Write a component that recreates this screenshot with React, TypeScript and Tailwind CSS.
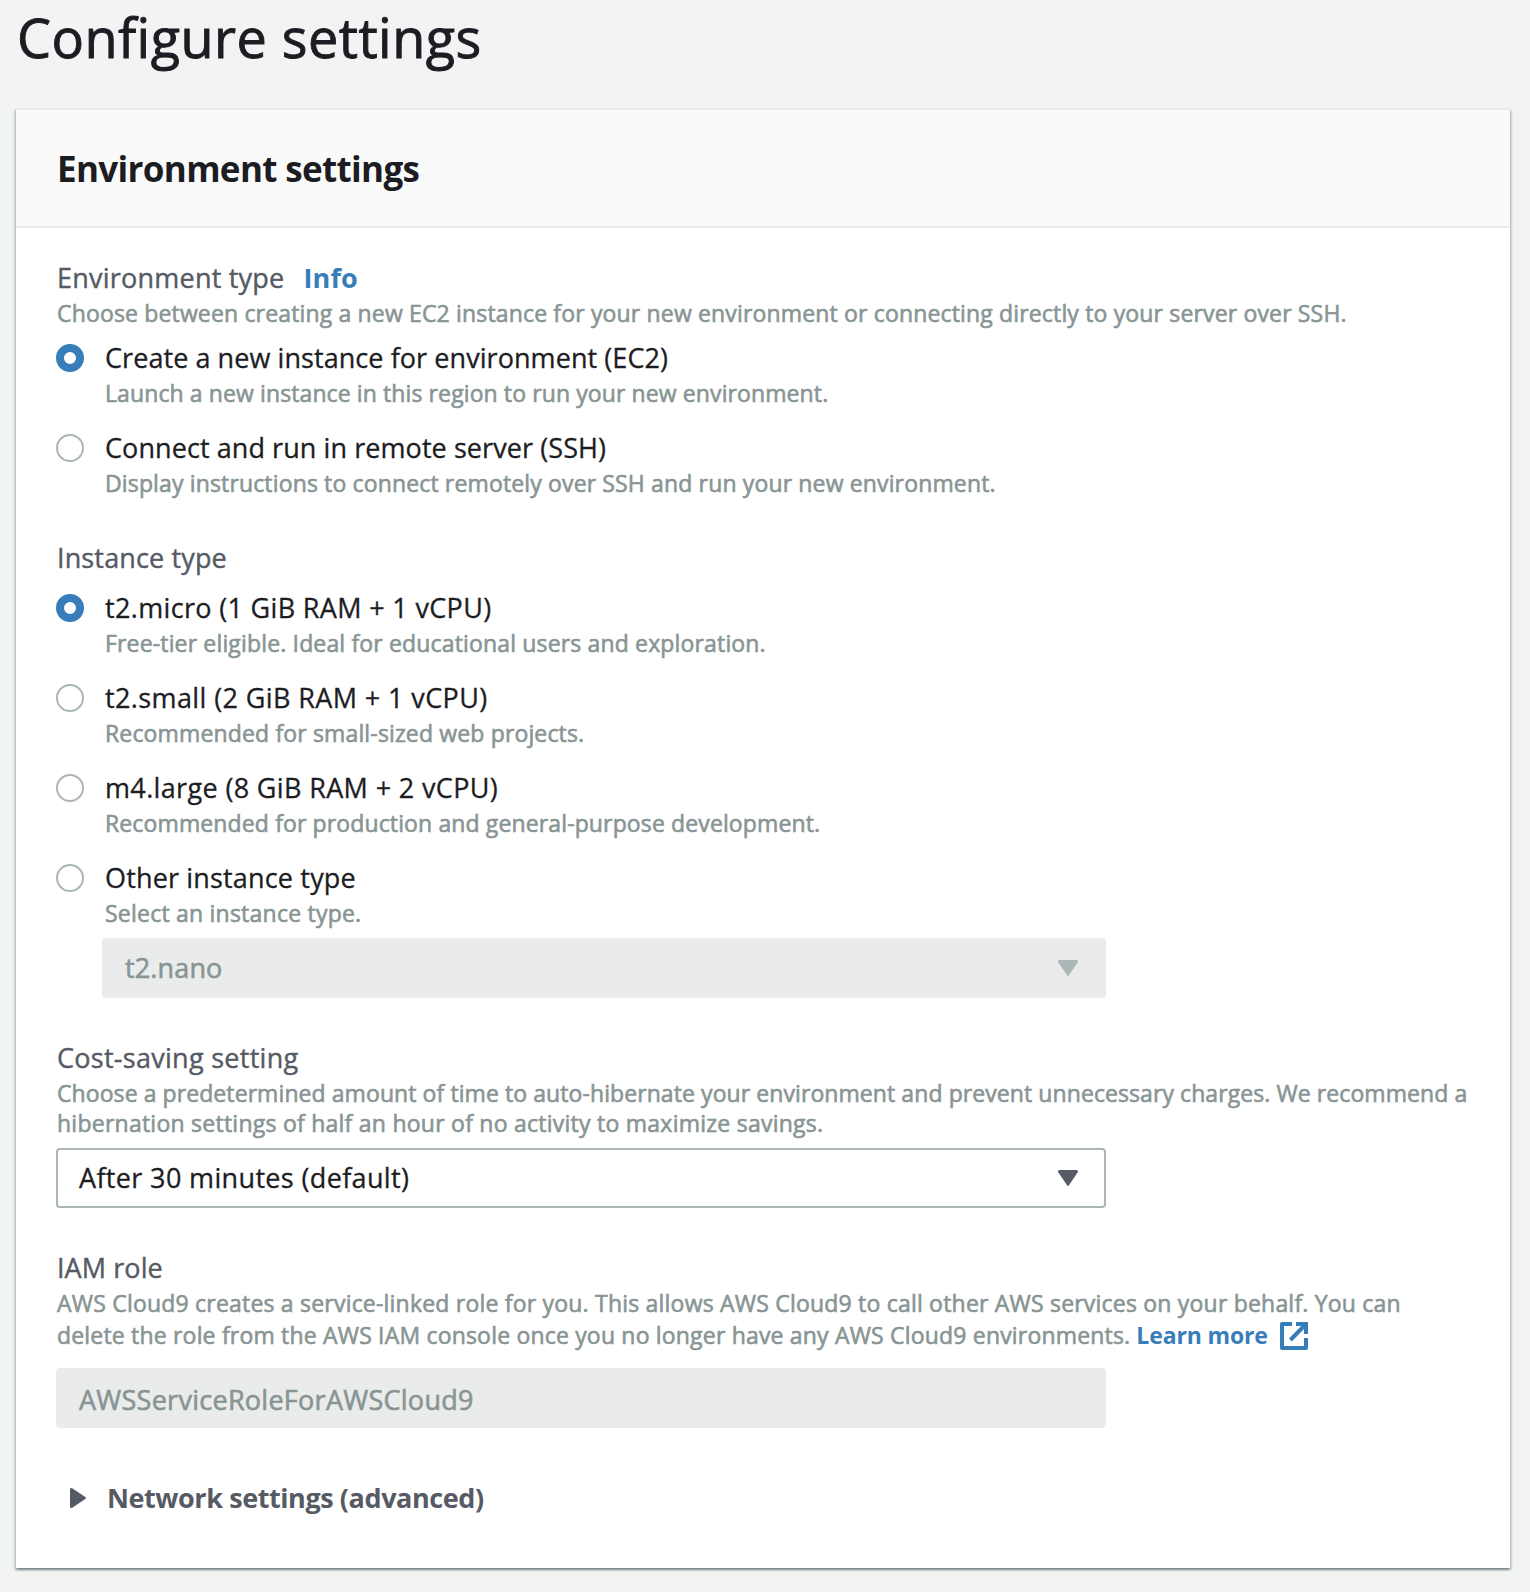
import type { ReactNode } from "react";

function Radio({ checked }: { checked?: boolean }) {
  return checked ? (
    <span className="mt-[5px] size-7 shrink-0 rounded-full border-8 border-[#377db9] bg-white" />
  ) : (
    <span className="mt-[5px] size-7 shrink-0 rounded-full border-2 border-[#abb6b7] bg-white" />
  );
}

function Option({
  label,
  hint,
  labelTracking,
  hintTracking,
  checked,
}: {
  label: string;
  hint: string;
  labelTracking: string;
  hintTracking: string;
  checked?: boolean;
}) {
  return (
    <div className="flex gap-5">
      <Radio checked={checked} />
      <div>
        <div
          className={`pl-px text-[27px] leading-[37px] text-[#1c1d23] [-webkit-text-stroke:0.3px_#1c1d23] ${labelTracking}`}
        >
          {label}
        </div>
        <Hint tracking={hintTracking}>{hint}</Hint>
      </div>
    </div>
  );
}

function Hint({ children, tracking }: { children: ReactNode; tracking: string }) {
  return (
    <div
      className={`mt-0.5 whitespace-nowrap pl-px text-[23px] leading-[30px] text-[#889594] [-webkit-text-stroke:0.6px_#889594] ${tracking}`}
    >
      {children}
    </div>
  );
}

function Label({ children, tracking }: { children: ReactNode; tracking: string }) {
  return (
    <div
      className={`pl-px text-[27px] leading-[37px] text-[#555a64] [-webkit-text-stroke:0.4px_#555a64] ${tracking}`}
    >
      {children}
    </div>
  );
}

function CaretDown({ className }: { className: string }) {
  return (
    <svg className={`h-4 w-5 ${className}`} viewBox="0 0 20 16" fill="currentColor">
      <path d="M1.2 0h17.6q1.8.4.9 2.2L11 15.3q-1 1.2-2 0L.3 2.2Q-.6.4 1.2 0z" />
    </svg>
  );
}

function ExternalIcon() {
  return (
    <svg className="ml-3 mt-0.5 size-7" viewBox="0 0 28 28" fill="none" stroke="currentColor" strokeWidth="4">
      <path d="M12 2H2v24h24V16" strokeLinejoin="round" />
      <path d="M16 2h10v10M26 2 10.4 18" />
    </svg>
  );
}

export default function App() {
  return (
    <div className="h-[1592px] w-[1530px] overflow-hidden bg-[#f2f4f3] font-['Open_Sans',sans-serif]">
      <h1 className="ml-[17px] h-[108px] text-[54px] leading-[74px] tracking-[0.45px] text-[#1c1d23] [-webkit-text-stroke:0.9px_#1c1d23]">
        Configure settings
      </h1>
      <section className="ml-4 h-[1460px] w-[1494px] border-t-2 border-[#e9ebea] bg-white shadow-[0_2px_2px_0_rgba(0,28,36,0.3),2px_2px_2px_0_rgba(0,28,36,0.15),-2px_2px_2px_0_rgba(0,28,36,0.15)]">
        <header className="h-[118px] border-b-2 border-[#e9ebea] bg-[#fafafa] px-10 pt-[35px]">
          <h2 className="pl-px text-[35px] font-bold leading-[47px] tracking-[-0.659px] text-[#1c1d23]">
            Environment settings
          </h2>
        </header>
        <div className="px-10 pt-[31px]">
          <div className="flex gap-[19px]">
            <Label tracking="tracking-[0.225px]">Environment type</Label>
            <a className="text-[27px] font-bold leading-[37px] tracking-[0.121px] text-[#377db9]">Info</a>
          </div>
          <Hint tracking="tracking-[0.158px]">
            Choose between creating a new EC2 instance for your new environment or connecting directly to your server
            over SSH.
          </Hint>
          <div className="mt-[11px] flex flex-col gap-[21px]">
            <Option
              checked
              label="Create a new instance for environment (EC2)"
              labelTracking="tracking-[0.066px]"
              hint="Launch a new instance in this region to run your new environment."
              hintTracking="tracking-[0.105px]"
            />
            <Option
              label="Connect and run in remote server (SSH)"
              labelTracking="tracking-[0.075px]"
              hint="Display instructions to connect remotely over SSH and run your new environment."
              hintTracking="tracking-[0.144px]"
            />
          </div>

          <div className="mt-[41px]">
            <Label tracking="tracking-[0.134px]">Instance type</Label>
          </div>
          <div className="mt-[13px] flex flex-col gap-[21px]">
            <Option
              checked
              label="t2.micro (1 GiB RAM + 1 vCPU)"
              labelTracking="tracking-[0.334px]"
              hint="Free-tier eligible. Ideal for educational users and exploration."
              hintTracking="tracking-[0.156px]"
            />
            <Option
              label="t2.small (2 GiB RAM + 1 vCPU)"
              labelTracking="tracking-[0.39px]"
              hint="Recommended for small-sized web projects."
              hintTracking="tracking-[0.149px]"
            />
            <Option
              label="m4.large (8 GiB RAM + 2 vCPU)"
              labelTracking="tracking-[0.353px]"
              hint="Recommended for production and general-purpose development."
              hintTracking="tracking-[0.127px]"
            />
            <Option
              label="Other instance type"
              labelTracking="tracking-[0.161px]"
              hint="Select an instance type."
              hintTracking="tracking-[0.227px]"
            />
          </div>
          <div className="ml-[46px] mt-2.5 flex h-[60px] w-[1004px] justify-between rounded bg-[#eaeceb] pl-[23px] pr-7">
            <span className="pt-[11px] text-[27px] leading-[37px] tracking-[0.138px] text-[#889594] [-webkit-text-stroke:0.6px_#889594]">
              t2.nano
            </span>
            <CaretDown className="mt-[22px] text-[#abb6b7]" />
          </div>

          <div className="mt-[41px]">
            <Label tracking="tracking-[0.279px]">Cost-saving setting</Label>
          </div>
          <Hint tracking="tracking-[0.08px]">
            Choose a predetermined amount of time to auto-hibernate your environment and prevent unnecessary charges. We
            recommend a
            <br />
            <span className="tracking-[0.247px]">
              hibernation settings of half an hour of no activity to maximize savings.
            </span>
          </Hint>
          <div className="mt-2.5 flex h-[60px] w-[1050px] justify-between rounded border-2 border-[#abb6b7] bg-white pl-[21px] pr-[26px]">
            <span className="pt-[9px] text-[27px] leading-[37px] tracking-[0.352px] text-[#1c1d23] [-webkit-text-stroke:0.3px_#1c1d23]">
              After 30 minutes (default)
            </span>
            <CaretDown className="mt-5 text-[#555a64]" />
          </div>

          <div className="mt-[41px]">
            <Label tracking="tracking-[0.074px]">IAM role</Label>
          </div>
          <Hint tracking="tracking-[0.206px]">
            AWS Cloud9 creates a service-linked role for you. This allows AWS Cloud9 to call other AWS services on your
            behalf. You can
          </Hint>
          <div className="flex">
            <Hint tracking="tracking-[0.185px]">
              delete the role from the AWS IAM console once you no longer have any AWS Cloud9 environments.
            </Hint>
            <a className="ml-1.5 mt-0.5 flex h-[30px] text-[23px] font-bold leading-[30px] tracking-[-0.142px] text-[#377db9]">
              Learn more
              <ExternalIcon />
            </a>
          </div>
          <div className="mt-[18px] h-[60px] w-[1050px] rounded bg-[#eaeceb] pl-[23px] pt-[13px] text-[27px] leading-[37px] tracking-[0.27px] text-[#889594] [-webkit-text-stroke:0.6px_#889594]">
            AWSServiceRoleForAWSCloud9
          </div>

          <div className="mt-[51px] flex text-[#555a64]">
            <svg className="ml-3.5 mt-[9px] h-5 w-4" viewBox="0 0 16 20" fill="currentColor">
              <path d="M0 1.2Q.4-.6 2.2.3L15.3 9q1.2 1 0 2L2.2 19.7Q.4 20.6 0 18.8z" />
            </svg>
            <span className="ml-[21px] text-[27px] font-bold leading-[37px] tracking-[-0.417px]">
              Network settings (advanced)
            </span>
          </div>
        </div>
      </section>
    </div>
  );
}
